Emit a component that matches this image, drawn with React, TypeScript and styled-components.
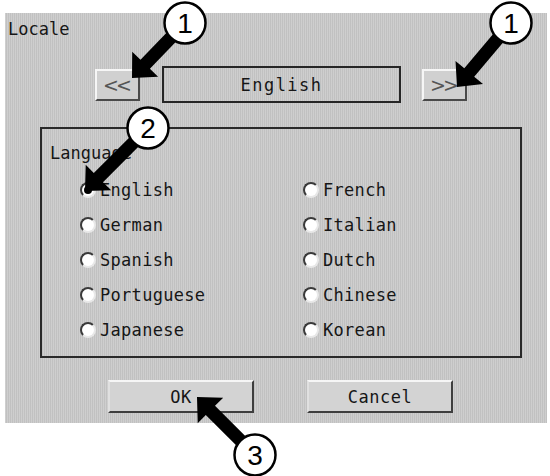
import { createGlobalStyle } from "styled-components";
import styled from "styled-components";

const GlobalStyle = createGlobalStyle`
  html, body { margin: 0; padding: 0; background: #fff; }
  body { font-family: "DejaVu Sans Mono", "Liberation Mono", monospace; }
`;

type Pt = [number, number];

// builds a thick callout arrow from a circle centre to its tip
function arrowPoints(from: Pt, tip: Pt, shaft = 6.5, head = 18, headLen = 19) {
  const dx = tip[0] - from[0];
  const dy = tip[1] - from[1];
  const len = Math.hypot(dx, dy);
  const ux = dx / len;
  const uy = dy / len;
  const nx = -uy;
  const ny = ux;
  const bx = tip[0] - ux * headLen;
  const by = tip[1] - uy * headLen;
  const pts: Pt[] = [
    [from[0] + nx * shaft, from[1] + ny * shaft],
    [bx + nx * shaft, by + ny * shaft],
    [bx + nx * head, by + ny * head],
    tip,
    [bx - nx * head, by - ny * head],
    [bx - nx * shaft, by - ny * shaft],
    [from[0] - nx * shaft, from[1] - ny * shaft],
  ];
  return pts.map((p) => p.map((v) => v.toFixed(1)).join(",")).join(" ");
}

const CALLOUTS: { n: string; c: Pt; tip: Pt }[] = [
  { n: "1", c: [185, 23], tip: [132, 78] },
  { n: "1", c: [511, 23], tip: [457, 87] },
  { n: "2", c: [148, 128], tip: [85, 191] },
  { n: "3", c: [255, 455], tip: [197, 397] },
];

const LANGS = [
  ["English", "French"],
  ["German", "Italian"],
  ["Spanish", "Dutch"],
  ["Portuguese", "Chinese"],
  ["Japanese", "Korean"],
];

export default function App() {
  return (
    <Page>
      <GlobalStyle />
      <Panel>
        <Title>Locale</Title>
        <NavRow>
          <NavButton>&lt;&lt;</NavButton>
          <Field>English</Field>
          <NavButton>&gt;&gt;</NavButton>
        </NavRow>
        <Group>
          <GroupLabel>Language</GroupLabel>
          <RadioGrid>
            {LANGS.flat().map((name) => (
              <RadioItem key={name}>
                <RadioDot $checked={name === "English"} />
                <span>{name}</span>
              </RadioItem>
            ))}
          </RadioGrid>
        </Group>
        <ButtonRow>
          <PushButton>OK</PushButton>
          <PushButton>Cancel</PushButton>
        </ButtonRow>
      </Panel>
      <Overlay width="550" height="476" viewBox="0 0 550 476">
        {CALLOUTS.map((c, i) => (
          <g key={i}>
            <polygon points={arrowPoints(c.c, c.tip)} fill="#000" />
            <circle cx={c.c[0]} cy={c.c[1]} r="20.5" fill="#fff" stroke="#000" strokeWidth="2.5" />
            <CalloutNum x={c.c[0]} y={c.c[1] + 10} textAnchor="middle">
              {c.n}
            </CalloutNum>
          </g>
        ))}
      </Overlay>
    </Page>
  );
}

const Page = styled.div`
  position: relative;
  width: 550px;
  height: 476px;
  overflow: hidden;
  background: #fff;
`;

const Panel = styled.div`
  margin: 13px 3px 0 5px;
  height: 410px;
  display: flex;
  flex-direction: column;
  background-color: #c9c9c9;
  background-image: repeating-linear-gradient(
    90deg,
    rgba(255, 255, 255, 0.1) 0 1px,
    rgba(0, 0, 0, 0.04) 1px 2px
  );
  color: #161616;
  font-size: 17px;
  letter-spacing: 0;
`;

const Title = styled.div`
  margin: 5px 0 0 3px;
  height: 22px;
  line-height: 22px;
`;

const NavRow = styled.div`
  display: flex;
  align-items: center;
  height: 37px;
  margin: 26px 0 0 90px;
`;

const NavButton = styled.div`
  box-sizing: border-box;
  width: 45px;
  height: 32px;
  display: flex;
  align-items: center;
  justify-content: center;
  background: #d0d0d0;
  border: 2px solid;
  border-color: #f6f6f6 #4a4a4a #4a4a4a #f6f6f6;
  color: #555;
  font-family: "DejaVu Sans", sans-serif;
  font-size: 19px;
  letter-spacing: -3px;
  padding-right: 3px;
`;

const Field = styled.div`
  box-sizing: border-box;
  width: 239px;
  height: 37px;
  margin: 0 21px 0 22px;
  display: flex;
  align-items: center;
  justify-content: center;
  border: 2px solid #262626;
  letter-spacing: 1.5px;
`;

const Group = styled.div`
  box-sizing: border-box;
  width: 482px;
  height: 231px;
  margin: 24px 0 0 35px;
  padding: 14px 0 0 8px;
  border: 2px solid #2a2a2a;
`;

const GroupLabel = styled.div`
  height: 20px;
  line-height: 20px;
`;

const RadioGrid = styled.div`
  display: grid;
  grid-template-columns: 223px 1fr;
  grid-auto-rows: 35px;
  margin: 9px 0 0 30px;
`;

const RadioItem = styled.label`
  display: flex;
  align-items: center;
  gap: 4px;
  letter-spacing: 0.3px;
`;

const RadioDot = styled.span<{ $checked?: boolean }>`
  box-sizing: border-box;
  width: 16px;
  height: 16px;
  border-radius: 50%;
  background: #fff;
  border: 2px solid;
  border-color: #3a3a3a #e8e8e8 #e8e8e8 #3a3a3a;
  display: flex;
  align-items: center;
  justify-content: center;
  &::after {
    content: "";
    width: 8px;
    height: 8px;
    border-radius: 50%;
    background: ${(p) => (p.$checked ? "#000" : "transparent")};
  }
`;

const ButtonRow = styled.div`
  display: flex;
  gap: 53px;
  margin: 22px 0 0 103px;
`;

const PushButton = styled.div`
  box-sizing: border-box;
  width: 146px;
  height: 33px;
  display: flex;
  align-items: center;
  justify-content: center;
  background: #d3d3d3;
  border: 2px solid;
  border-color: #f6f6f6 #3e3e3e #3e3e3e #e0e0e0;
  letter-spacing: 0.5px;
`;

const Overlay = styled.svg`
  position: absolute;
  left: 0;
  top: 0;
  pointer-events: none;
`;

const CalloutNum = styled.text`
  font-family: "Liberation Sans", Arial, sans-serif;
  font-size: 28px;
  fill: #000;
`;
